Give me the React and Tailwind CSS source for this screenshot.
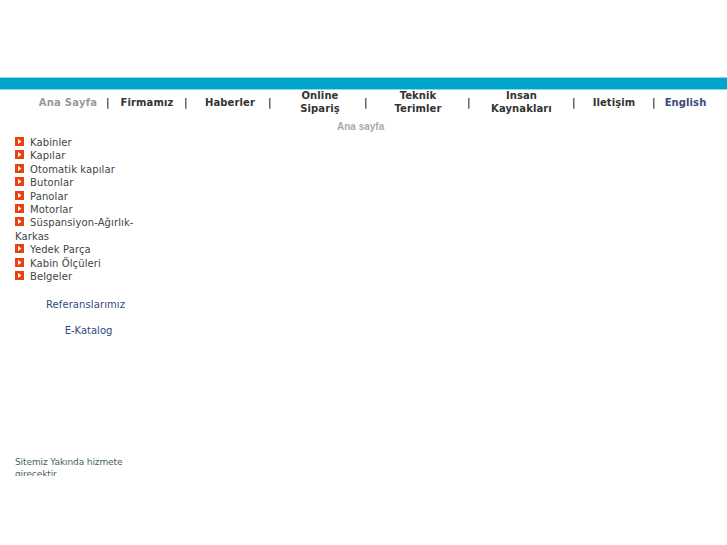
const menu = ['Kabinler', 'Kapılar', 'Otomatik kapılar', 'Butonlar', 'Panolar', 'Motorlar', 'Süspansiyon-Ağırlık-Karkas', 'Yedek Parça', 'Kabin Ölçüleri', 'Belgeler'];

const Sep = () => (
  <span className="w-[8px] shrink-0 pl-[2px] text-left text-[#333] font-bold tracking-normal will-change-transform">|</span>
);

const Bullet = () => (
  <svg width="9" height="9" viewBox="0 0 9 9" className="inline-block align-baseline mr-[6px]">
    <rect width="9" height="9" fill="#e8430f" />
    <path d="M3 2 L6.5 4.5 L3 7 Z" fill="#fff" />
  </svg>
);

export default function App() {
  return (
    <div className="w-[727px] h-[545px] bg-white overflow-hidden font-['DejaVu_Sans',sans-serif] text-[10px] text-[#444]">
      <div className="h-[77px]" />
      <div className="h-[13px] bg-[#00a5cb] border-y border-[#8fd8e8]" />

      <div className="h-[24px] flex items-center font-bold leading-[13px] text-center text-[#333] tracking-[0.1px]">
        <span className="w-[104px] pl-[32px] shrink-0 text-[#999] tracking-[0.25px]">Ana Sayfa</span>
        <Sep />
        <span className="w-[70px] shrink-0">Firmamız</span>
        <Sep />
        <span className="w-[76px] shrink-0 pl-[4px]">Haberler</span>
        <Sep />
        <span className="w-[88px] shrink-0 pl-[14px] pr-[10px]">Online Sipariş</span>
        <Sep />
        <span className="w-[95px] shrink-0 pl-[15px] pr-[14px]">Teknik Terimler</span>
        <Sep />
        <span className="w-[97px] shrink-0 px-[10px]">Insan Kaynakları</span>
        <Sep />
        <span className="w-[72px] shrink-0">Iletişim</span>
        <Sep />
        <span className="w-[55px] shrink-0 text-[#3b4a78]">English</span>
      </div>

      <div className="h-[21px] pl-[337px] pt-[7px] font-['Liberation_Sans',sans-serif] text-[10px] font-bold leading-[12px] text-[#aaa]">
        Ana sayfa
      </div>

      <ul className="w-[125px] ml-[15px] mt-[1px] leading-[13.4px] tracking-[0.1px]">
        {menu.map((item) => (
          <li key={item}>
            <Bullet />
            {item}
          </li>
        ))}
      </ul>

      <div className="w-[141px] ml-[15px] mt-[15px] text-center leading-[13px] tracking-[0.1px] text-[#2f4a80]">
        Referanslarımız
      </div>
      <div className="w-[147px] ml-[15px] mt-[13px] text-center leading-[13px] text-[#2f4a80]">
        E-Katalog
      </div>

      <div className="w-[115px] h-[20px] overflow-hidden ml-[15px] mt-[119px] text-[9px] leading-[12px] tracking-[-0.1px] text-[#4a5f5f]">
        Sitemiz Yakında hizmete girecektir
      </div>
    </div>
  );
}
